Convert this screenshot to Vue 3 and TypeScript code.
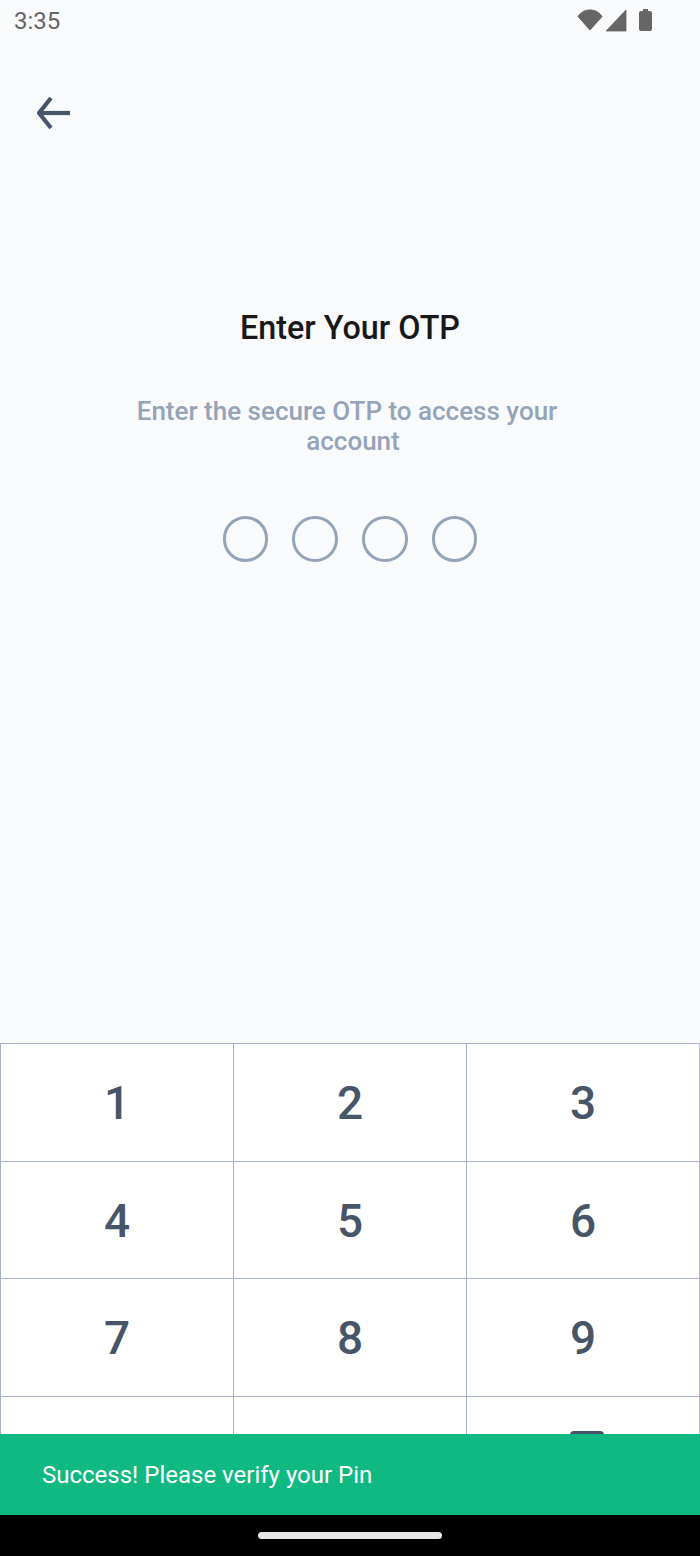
<template>
  <div class="screen">
    <div class="status-bar">
      <span class="time">3:35</span>
      <div class="status-icons">
        <svg class="wifi" width="26" height="22" viewBox="0 0 26 22">
          <path d="M1 7.500C4 3 8 1 13 1s9 2 12 6.500L13 21z" fill="#666" stroke="#666" stroke-linejoin="round" />
        </svg>
        <svg class="signal" width="22" height="23" viewBox="0 0 22 23">
          <path d="M21 1v21H1z" fill="#666" stroke="#666" stroke-width="0.8" stroke-linejoin="round" />
        </svg>
        <svg class="battery" width="13" height="22" viewBox="0 0 13 22">
          <path d="M4 0h5v2h2a2 2 0 0 1 2 2v16a2 2 0 0 1-2 2H2a2 2 0 0 1-2-2V4a2 2 0 0 1 2-2h2z" fill="#666" />
        </svg>
      </div>
    </div>

    <button class="back" type="button" aria-label="Back">
      <svg width="36" height="34" viewBox="0 0 36 34" fill="none" stroke="#475569" stroke-width="4.200">
        <path d="M35 17H4" />
        <path d="M16 2 4 17l12 15" stroke-linejoin="round" />
      </svg>
    </button>

    <main class="content">
      <h1 class="title">Enter Your OTP</h1>
      <p class="subtitle">
        <span class="line-one">Enter the secure OTP to access your</span>
        <span class="line-two">account</span>
      </p>
      <div class="dots">
        <span v-for="n in 4" :key="n" class="dot"></span>
      </div>
    </main>

    <div class="keypad">
      <button v-for="key in keys" :key="key" class="key" type="button">{{ key }}</button>
      <button class="key" type="button" aria-label="Empty"></button>
      <button class="key" type="button" aria-label="Zero"></button>
      <button class="key" type="button" aria-label="Delete">
        <span class="backspace"></span>
      </button>
    </div>

    <div class="bottom">
      <div class="toast">Success! Please verify your Pin</div>
      <div class="nav-bar">
        <span class="home-pill"></span>
      </div>
    </div>
  </div>
</template>

<script setup lang="ts">
const keys: string[] = ['1', '2', '3', '4', '5', '6', '7', '8', '9']
</script>

<style scoped>
.screen {
  position: relative;
  display: flex;
  flex-direction: column;
  width: 700px;
  height: 1556px;
  overflow: hidden;
  background: #f8fafc;
  font-family: Roboto, "Liberation Sans", sans-serif;
}

.status-bar {
  display: flex;
  align-items: flex-start;
  justify-content: space-between;
  height: 42px;
  padding: 8px 48px 0 14px;
  box-sizing: border-box;
}

.time {
  font-size: 24px;
  line-height: 27px;
  color: #666;
}

.status-icons {
  display: flex;
  margin-top: 1px;
}

.signal {
  margin-left: 2px;
}

.battery {
  margin-left: 12px;
}

.back {
  align-self: flex-start;
  display: flex;
  margin: 54px 0 0 35px;
  padding: 0;
  border: 0;
  background: none;
}

.content {
  flex: 1;
  display: flex;
  flex-direction: column;
  align-items: center;
}

.title {
  margin: 179px 0 0;
  font-size: 32.300px;
  line-height: 38px;
  font-weight: 500;
  color: #18181b;
}

.subtitle {
  display: flex;
  flex-direction: column;
  align-items: center;
  margin: 49px 0 0;
  font-size: 26px;
  line-height: 30px;
  font-weight: 500;
  color: #94a3b8;
}

.line-one {
  padding-right: 6px;
}

.line-two {
  padding-left: 6px;
}

.dots {
  display: flex;
  gap: 24.2px;
  margin-top: 60px;
}

.dot {
  width: 45.500px;
  height: 45.500px;
  box-sizing: border-box;
  border: 3.500px solid #94a3b8;
  border-radius: 50%;
}

.keypad {
  display: grid;
  grid-template-columns: repeat(3, 233px);
  grid-auto-rows: 117.5px;
  margin-bottom: 43px;
  flex: none;
  background: #fff;
  border-right: 1px solid #b4bfcf;
}

.key {
  display: flex;
  align-items: center;
  justify-content: center;
  padding: 2px 0 0;
  background: #fff;
  border: 0;
  border-top: 1px solid #a8b4c6;
  border-left: 1px solid #a8b4c6;
  font-family: inherit;
  font-size: 46px;
  font-weight: 500;
  color: #475569;
}

.backspace {
  width: 34px;
  height: 50px;
  margin-left: 8px;
  border-radius: 4px;
  background: #475569;
}

.bottom {
  position: absolute;
  left: 0;
  right: 0;
  bottom: 0;
}

.toast {
  height: 81px;
  padding-left: 42px;
  box-sizing: border-box;
  background: #10b981;
  color: #fff;
  font-size: 24px;
  line-height: 82px;
}

.nav-bar {
  display: flex;
  justify-content: center;
  height: 41px;
  padding-top: 17px;
  box-sizing: border-box;
  background: #000;
}

.home-pill {
  width: 184px;
  height: 7px;
  border-radius: 4px;
  background: #e8e8e8;
}
</style>
